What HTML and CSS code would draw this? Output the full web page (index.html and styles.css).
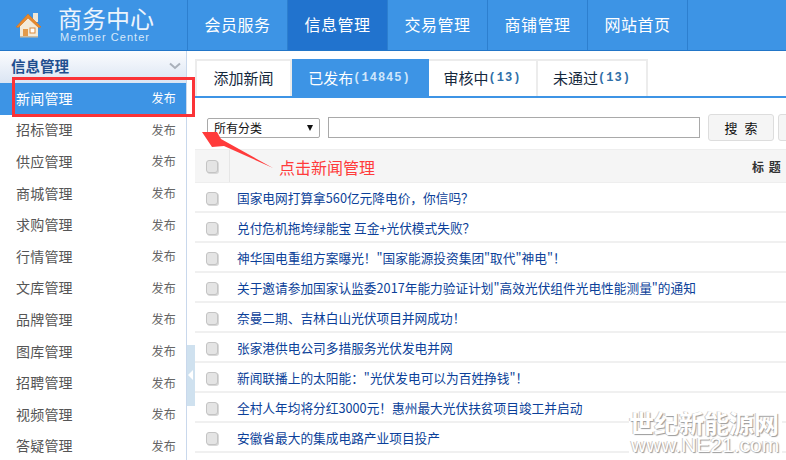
FILE: index.html
```html
<!DOCTYPE html>
<html lang="zh">
<head>
<meta charset="utf-8">
<title>商务中心</title>
<link rel="stylesheet" href="styles.css">
</head>
<body>
<header class="top">
  <div class="brand">
    <svg class="house" width="28" height="26" viewBox="0 0 28 26">
      <path d="M5 12 L14 4 L23 12 V25 H5 Z" fill="#f3ead8"/>
      <path d="M18 1 h5 v9 h-5 Z" fill="#efe6d6"/>
      <path d="M1 15 L13 2 L26 15 L23.500 15.500 L13 6 L3.500 15.500 Z" fill="#e8892c" stroke="#d2741f" stroke-width=".6"/>
      <rect x="8" y="17" width="5" height="8" fill="#e39a4a"/>
      <rect x="15" y="16" width="5" height="5" fill="#fff" stroke="#d98a3c"/>
      <rect x="5" y="24" width="18" height="1.500" fill="#cdbb9e"/>
    </svg>
    <div class="brand-text">
      <div class="brand-cn">商务中心</div>
      <div class="brand-en">Member Center</div>
    </div>
  </div>
  <nav class="nav">
    <a class="nav-item">会员服务</a>
    <a class="nav-item active">信息管理</a>
    <a class="nav-item">交易管理</a>
    <a class="nav-item">商铺管理</a>
    <a class="nav-item">网站首页</a>
  </nav>
</header>
<div class="body">
  <aside class="side">
    <div class="side-head">
      <span>信息管理</span>
      <svg width="12" height="8" viewBox="0 0 12 8"><path d="M1 1.500 L6 6 L11 1.500" fill="none" stroke="#a9b0ba" stroke-width="2"/></svg>
    </div>
    <ul class="menu">
      <li class="menu-row on"><span>新闻管理</span><em>发布</em></li>
      <li class="menu-row"><span>招标管理</span><em>发布</em></li>
      <li class="menu-row"><span>供应管理</span><em>发布</em></li>
      <li class="menu-row"><span>商城管理</span><em>发布</em></li>
      <li class="menu-row"><span>求购管理</span><em>发布</em></li>
      <li class="menu-row"><span>行情管理</span><em>发布</em></li>
      <li class="menu-row"><span>文库管理</span><em>发布</em></li>
      <li class="menu-row"><span>品牌管理</span><em>发布</em></li>
      <li class="menu-row"><span>图库管理</span><em>发布</em></li>
      <li class="menu-row"><span>招聘管理</span><em>发布</em></li>
      <li class="menu-row"><span>视频管理</span><em>发布</em></li>
      <li class="menu-row"><span>答疑管理</span><em>发布</em></li>
    </ul>
  </aside>
  <main class="main">
    <div class="tabs">
      <a class="tab t1">添加新闻</a>
      <a class="tab t2 on">已发布<small>(14845)</small></a>
      <a class="tab t3">审核中<small>(13)</small></a>
      <a class="tab t4">未通过<small>(13)</small></a>
    </div>
    <div class="filter">
      <div class="select"><span>所有分类</span><i></i></div>
      <div class="input"></div>
      <div class="btn">搜 索</div>
      <div class="btn"></div>
    </div>
    <div class="thead">
      <div class="tcheck"><span class="cb"></span></div>
      <div class="ttitle">标 题</div>
    </div>
    <ul class="list">
      <li class="row"><span class="cb"></span><a>国家电网打算拿560亿元降电价，你信吗？</a></li>
      <li class="row"><span class="cb"></span><a>兑付危机拖垮绿能宝 互金+光伏模式失败？</a></li>
      <li class="row"><span class="cb"></span><a>神华国电重组方案曝光！"国家能源投资集团"取代"神电"！</a></li>
      <li class="row"><span class="cb"></span><a>关于邀请参加国家认监委2017年能力验证计划"高效光伏组件光电性能测量"的通知</a></li>
      <li class="row"><span class="cb"></span><a>奈曼二期、吉林白山光伏项目并网成功！</a></li>
      <li class="row"><span class="cb"></span><a>张家港供电公司多措服务光伏发电并网</a></li>
      <li class="row"><span class="cb"></span><a>新闻联播上的太阳能："光伏发电可以为百姓挣钱"！</a></li>
      <li class="row"><span class="cb"></span><a>全村人年均将分红3000元！惠州最大光伏扶贫项目竣工并启动</a></li>
      <li class="row"><span class="cb"></span><a>安徽省最大的集成电路产业项目投产</a></li>
    </ul>
  </main>
</div>
<div class="handle"></div>
<div class="mark-box"></div>
<svg class="mark-arrow" width="80" height="50" viewBox="0 0 80 50"><path d="M2 7 L17 7 L21 14 L73 43 L24 21 L12 22 Z" fill="#ff3b3b"/></svg>
<div class="mark-text">点击新闻管理</div>
<div class="wm"><div class="wm-cn">世纪新能源网</div><div class="wm-en">www.NE21.com</div></div>
</body>
</html>
```
FILE: styles.css
```css
*{box-sizing:border-box}
html,body{margin:0;padding:0}
body{width:786px;height:460px;overflow:hidden;position:relative;background:#fff;font-family:"Noto Sans CJK SC","Liberation Sans",sans-serif;font-size:14px;color:#333}
ul{list-style:none;margin:0;padding:0}
.top{height:51px;display:flex;background:#3d94e5;border-bottom:1px solid #2276c8}
.brand{width:187px;display:flex;align-items:center;padding-left:15px;gap:15px}
.brand-text{display:flex;flex-direction:column;align-items:flex-start}
.brand-cn{color:#fff;font-size:24px;line-height:26px;opacity:.9;margin-top:-2px}
.brand-en{color:#d6e8fa;font-family:"Liberation Sans",sans-serif;font-size:11px;line-height:12px;letter-spacing:1.05px;padding-left:2px}
.nav{display:flex;border-left:1px solid #2d7fcf}
.nav-item{width:100px;height:50px;padding-bottom:3px;display:flex;align-items:center;justify-content:center;color:#fff;font-size:16px;letter-spacing:.5px;border-right:1px solid #2d7fcf}
.nav-item.active{background:#2173ce}
.body{display:flex;height:409px}
.side{width:187px;border-right:1px solid #c9d8ec;flex:none;overflow:hidden}
.side-head{height:32px;padding:0 5px 3px 11px;display:flex;align-items:center;justify-content:space-between;background:linear-gradient(#fbfcfe,#dbe5f3);font-weight:700;color:#1f4f8f;font-size:14.5px}
.menu-row{height:31.6px;padding:0 10px 2px 16px;display:flex;align-items:center;justify-content:space-between;font-size:14px;color:#555;letter-spacing:.2px}
.menu-row em{font-style:normal;font-size:12px;color:#666}
.menu-row.on{background:#3d94e5;color:#fff}
.menu-row.on em{color:#fff}
.main{flex:1;min-width:0;padding:8px 0 0 8px;overflow:hidden}
.tabs{display:flex;height:39px;border-bottom:2px solid #3d94e5}
.tab{height:37px;padding-bottom:2px;display:flex;align-items:center;justify-content:center;font-size:15px;color:#15283c;border:solid #ececec;border-width:2px 2px 0 0}
.tab small{font-size:12px;font-family:"Liberation Mono",monospace;color:#2f6fa8;letter-spacing:1px;font-weight:700}
.t1{width:97px;border-left-width:2px}
.t2{width:137px}
.t3{width:109px}
.t4{width:110px}
.tab.on{background:#3d94e5;color:#fff;border-color:#3d94e5}
.tab.on small{color:#cfe6fb}
.filter{height:51px;display:flex;align-items:center;padding:8px 0 0 12px;width:640px}
.select{width:113px;height:20px;flex:none;border:1px solid #a9a9a9;border-radius:2px;display:flex;align-items:center;justify-content:space-between;padding:0 6px;color:#111;font-size:12px}
.select i{border:solid transparent;border-width:6px 3.500px 0;border-top-color:#111}
.input{width:372px;height:21px;flex:none;margin-left:8px;border:1px solid #a9a9a9}
.btn{width:66px;height:27px;flex:none;margin-left:8px;background:#f5f5f5;border:1px solid #ddd;border-radius:3px;display:flex;align-items:center;justify-content:center;font-size:13px;word-spacing:4px;color:#111}
.btn:last-child{margin-left:4px;width:40px}
.thead{height:34px;display:flex;width:600px;background:#f5f5f5;border-top:1px solid #eee;border-bottom:1px solid #eee}
.tcheck{width:35px;border-right:1px solid #e6e6e6;display:flex;align-items:center;justify-content:center}
.ttitle{flex:1;display:flex;align-items:center;padding-left:522px;font-weight:700;font-size:12px;color:#333;letter-spacing:1px}
.cb{width:12px;height:13px;flex:none;display:block;background:#e4e4e4;border:1px solid #c4c4c4;border-radius:3px;box-shadow:1px 1px 0 #d8d8d8}
.row{height:30px;width:600px;padding:2px 0 0 11px;display:flex;align-items:center;gap:19px;border-bottom:2px solid #f0f0f0}
.row a{color:#0b3f99;font-size:12.7px;white-space:nowrap;padding-bottom:2px}
.handle{position:absolute;left:187px;top:345px;width:8px;height:61px;background:#cfe1ef}
.handle::after{content:"";position:absolute;left:1px;top:25px;border:solid transparent;border-width:5px 5px 5px 0;border-right-color:#fff}
.mark-box{position:absolute;left:12px;top:77px;width:183px;height:40px;border:3px solid #fb3337}
.mark-arrow{position:absolute;left:200px;top:125px}
.mark-text{position:absolute;left:279px;top:156px;font-size:16px;line-height:22px;color:#ff3b3b}
.wm{position:absolute;left:629px;top:409px;width:153px;height:46px;background:#fff;color:#fff;text-shadow:1px 1px 1px #999,-1px 0 0 #ccc}
.wm-cn{font-size:25px;line-height:27px;font-weight:700;white-space:nowrap}
.wm-en{font-family:"Liberation Sans",sans-serif;font-size:21px;line-height:18px;white-space:nowrap;padding-left:2px}
```
